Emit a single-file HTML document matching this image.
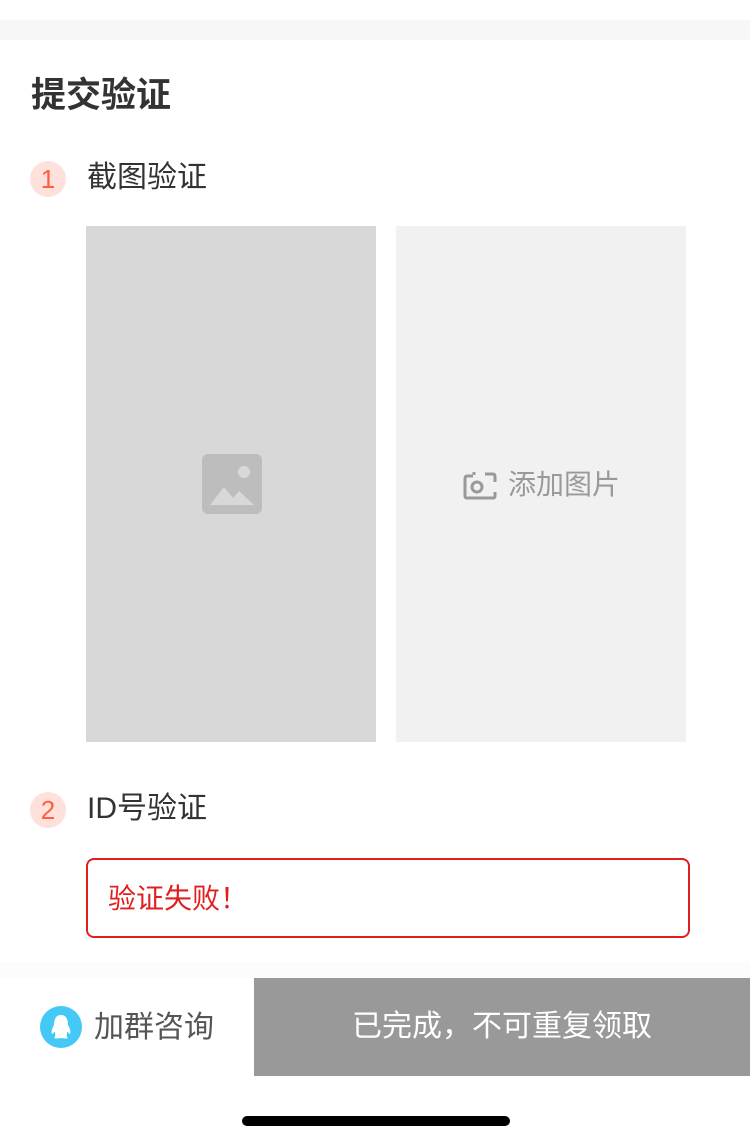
<!DOCTYPE html>
<html><head><meta charset="utf-8"><style>
*{margin:0;padding:0;box-sizing:border-box}
body{width:750px;height:1144px;background:#fff;font-family:"Liberation Sans","Noto Sans CJK SC",sans-serif;position:relative;overflow:hidden;color:#333}
.a{position:absolute}
.num{width:36px;height:36px;border-radius:50%;background:#ffe1dc;color:#ff5e3f;font-size:26px;text-align:center;line-height:36px}
.lbl{font-size:30px;color:#333;line-height:36px}
</style></head><body>
<div class="a" style="left:0;top:20px;width:750px;height:20px;background:#f7f7f7"></div>
<div class="a" style="left:31px;top:74px;font-size:35px;font-weight:bold;color:#333;line-height:44px">提交验证</div>
<div class="a num" style="left:30px;top:161px">1</div>
<div class="a lbl" style="left:87px;top:160px">截图验证</div>
<div class="a" style="left:86px;top:226px;width:290px;height:516px;background:#d8d8d8"></div>
<svg class="a" style="left:202px;top:454px" width="60" height="60" viewBox="0 0 60 60"><rect width="60" height="60" rx="6" fill="#bdbdbd"/><circle cx="42" cy="18" r="6" fill="#d8d8d8"/><path d="M8 51 L22 33 L31 44 L37 37 L52 51 Z" fill="#d8d8d8"/></svg>
<div class="a" style="left:396px;top:226px;width:290px;height:516px;background:#f1f1f1"></div>
<svg class="a" style="left:463px;top:470px" width="34" height="30" viewBox="0 0 34 30"><path d="M11 5 L11 2 M4 6 H10 M4 6 Q2 6 2 9 V26 Q2 28 4 28 H30 Q32 28 32 26 V22" fill="none" stroke="#999" stroke-width="3"/><path d="M22 4 H30 Q32 4 32 7 V12" fill="none" stroke="#999" stroke-width="3"/><circle cx="14" cy="17" r="5" fill="none" stroke="#999" stroke-width="3"/></svg>
<div class="a" style="left:508px;top:467px;font-size:28px;color:#999;line-height:36px">添加图片</div>
<div class="a num" style="left:30px;top:792px">2</div>
<div class="a lbl" style="left:87px;top:791px">ID号验证</div>
<div class="a" style="left:86px;top:858px;width:604px;height:80px;border:2px solid #e02020;border-radius:8px;color:#e02020;font-size:28px;line-height:78px;padding-left:20px">验证失败！</div>
<div class="a" style="left:0;top:962px;width:750px;height:16px;background:#fcfcfc"></div>
<div class="a" style="left:40px;top:1006px;width:42px;height:42px;border-radius:50%;background:#44c8f5"></div>
<svg class="a" style="left:49px;top:1013px" width="24" height="28" viewBox="0 0 24 28"><path d="M12 2 C6 2 5 8 5 12 C3 15 2 19 3 21 C5 20 5 19 6 19 C6 22 7 23 5 25 C8 26 11 25 12 25 C13 25 16 26 19 25 C17 23 18 22 18 19 C19 19 19 20 21 21 C22 19 21 15 19 12 C19 8 18 2 12 2Z" fill="#fff"/></svg>
<div class="a" style="left:94px;top:1008px;font-size:30px;color:#555;line-height:40px">加群咨询</div>
<div class="a" style="left:254px;top:978px;width:496px;height:98px;background:#999;color:#fff;font-size:30px;text-align:center;line-height:98px">已完成，不可重复领取</div>
<div class="a" style="left:242px;top:1116px;width:268px;height:10px;border-radius:5px;background:#000"></div>
</body></html>
